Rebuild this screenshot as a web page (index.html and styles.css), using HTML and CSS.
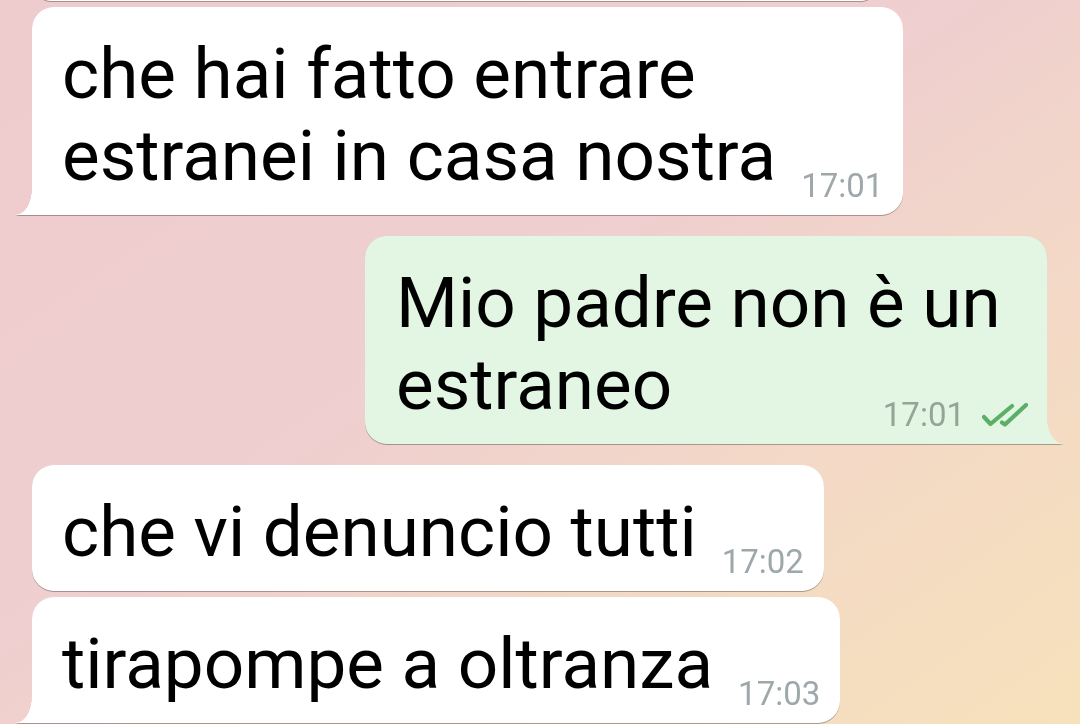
FILE: index.html
```
<!DOCTYPE html>
<html lang="it">
<head>
    <meta charset="UTF-8">
    <meta name="viewport" content="width=device-width, initial-scale=1.0">
    <title>Chat</title>
    <link rel="stylesheet" href="styles.css">
</head>
<body>
    <div class="chat">
        <!-- messaggio precedente, se ne vede solo il bordo -->
        <div class="bubble in prev"></div>

        <div class="bubble in tail grouped">
            <div class="line">che hai fatto entrare</div>
            <div class="line last">
                <span>estranei in casa nostra</span>
                <span class="meta"><span class="time">17:01</span></span>
            </div>
        </div>

        <div class="bubble out tail">
            <div class="line">Mio padre non è un</div>
            <div class="line last">
                <span>estraneo</span>
                <span class="meta">
                    <span class="time">17:01</span>
                    <svg class="ticks" width="46" height="24" viewBox="0 0 46 24">
                        <polyline points="2,14 8.5,21 30,3" />
                        <polyline points="20,19.5 23,21.5 44,2" />
                    </svg>
                </span>
            </div>
        </div>

        <div class="bubble in">
            <div class="line last">
                <span>che vi denuncio tutti</span>
                <span class="meta"><span class="time">17:02</span></span>
            </div>
        </div>

        <div class="bubble in tail grouped">
            <div class="line last">
                <span>tirapompe a oltranza</span>
                <span class="meta"><span class="time">17:03</span></span>
            </div>
        </div>
    </div>
</body>
</html>
```

FILE: styles.css
```
body {
    margin: 0;
    height: 724px;
    overflow: hidden;
    font-family: Roboto, "Noto Sans", sans-serif;
    background: linear-gradient(to bottom right, #eecbcd 0%, #efcfcf 45%, #f3d9c6 70%, #f7e1bb 100%);
}

.chat {
    display: flex;
    flex-direction: column;
    align-items: flex-start;
    padding: 0 33px 0 32px;
}

.bubble {
    position: relative;
    padding: 26px 20px 18px 30px;
    border-radius: 22px;
    background-color: #fff;
    font-size: 71px;
    line-height: 82px;
    color: #000;
    margin-top: 21px;
    filter: drop-shadow(0 1px 0.6px rgba(0, 0, 0, 0.3));
}

.bubble.grouped {
    margin-top: 6px;
}

/* bordo del messaggio sopra */
.bubble.prev {
    width: 848px;
    height: 40px;
    padding: 0;
    margin-top: -39px;
}

.bubble.out {
    align-self: flex-end;
    width: 682px;
    box-sizing: border-box;
    padding: 26px 19px 18px 31px;
    background-color: #e2f6e3;
}

.bubble.in.tail {
    border-bottom-left-radius: 0;
}

.bubble.out.tail {
    border-bottom-right-radius: 0;
}

.bubble.tail::after {
    content: "";
    position: absolute;
    bottom: 0;
    width: 16px;
    height: 26px;
}

.bubble.in.tail::after {
    left: -16px;
    background: radial-gradient(16px 26px at 0 0, transparent 97%, #fff 100%);
}

.bubble.out.tail::after {
    right: -16px;
    background: radial-gradient(16px 26px at 100% 0, transparent 97%, #e2f6e3 100%);
}

.line {
    white-space: nowrap;
}

.last {
    display: flex;
    align-items: flex-end;
}

.meta {
    display: flex;
    align-items: flex-end;
    gap: 17px;
    margin-left: auto;
    padding-left: 25px;
    font-size: 33px;
    line-height: 33px;
    margin-bottom: -5px;
    color: #9ea8ab;
}

.out .meta {
    color: #93a597;
}

.ticks {
    margin-bottom: 4px;
}

.ticks polyline {
    fill: none;
    stroke: #5caf66;
    stroke-width: 4.2;
    stroke-linecap: round;
    stroke-linejoin: round;
}
```
